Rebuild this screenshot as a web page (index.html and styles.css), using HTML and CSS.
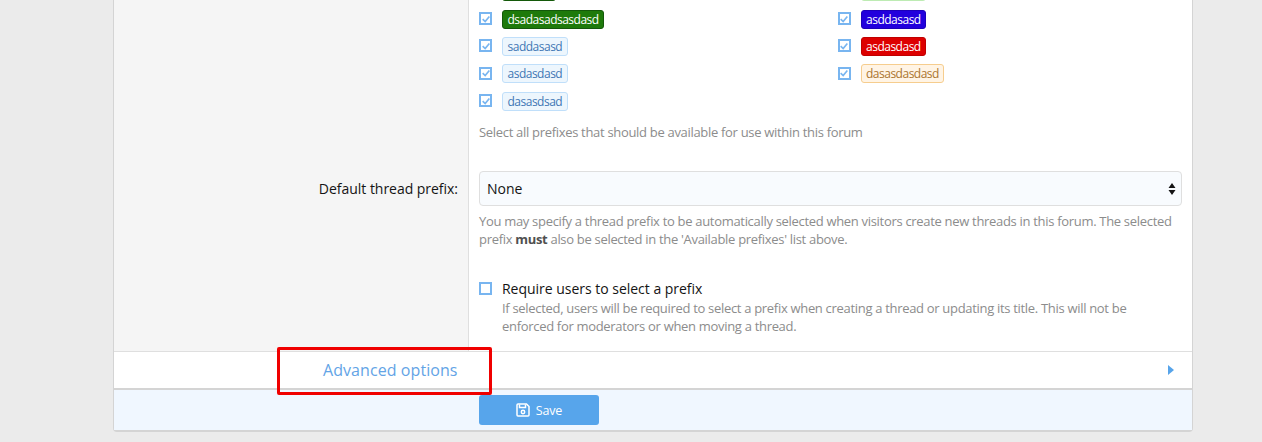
FILE: index.html
```html
<!DOCTYPE html>
<html lang="en">
<head>
<meta charset="utf-8">
<title>Forum options</title>
<link rel="stylesheet" href="styles.css">
</head>
<body>
<main class="card">
  <div class="form-body">
    <div class="form-row form-row-first">
      <div class="label-col"></div>
      <div class="field-col">
        <div class="prefix-grid">
          <label class="prefix"><span class="check checked"><svg viewBox="0 0 12 12"><path d="M2 6.200 5 9l5-6"/></svg></span><span class="badge badge-green">dsadsad</span></label>
          <label class="prefix"><span class="check checked"><svg viewBox="0 0 12 12"><path d="M2 6.200 5 9l5-6"/></svg></span><span class="badge badge-lightgreen">dsadsadsa</span></label>
          <label class="prefix"><span class="check checked"><svg viewBox="0 0 12 12"><path d="M2 6.200 5 9l5-6"/></svg></span><span class="badge badge-green">dsadasadsasdasd</span></label>
          <label class="prefix"><span class="check checked"><svg viewBox="0 0 12 12"><path d="M2 6.200 5 9l5-6"/></svg></span><span class="badge badge-blue">asddasasd</span></label>
          <label class="prefix"><span class="check checked"><svg viewBox="0 0 12 12"><path d="M2 6.200 5 9l5-6"/></svg></span><span class="badge badge-light">saddasasd</span></label>
          <label class="prefix"><span class="check checked"><svg viewBox="0 0 12 12"><path d="M2 6.200 5 9l5-6"/></svg></span><span class="badge badge-red">asdasdasd</span></label>
          <label class="prefix"><span class="check checked"><svg viewBox="0 0 12 12"><path d="M2 6.200 5 9l5-6"/></svg></span><span class="badge badge-light">asdasdasd</span></label>
          <label class="prefix"><span class="check checked"><svg viewBox="0 0 12 12"><path d="M2 6.200 5 9l5-6"/></svg></span><span class="badge badge-orange">dasasdasdasd</span></label>
          <label class="prefix"><span class="check checked"><svg viewBox="0 0 12 12"><path d="M2 6.200 5 9l5-6"/></svg></span><span class="badge badge-light">dasasdsad</span></label>
        </div>
        <p class="hint hint-prefixes">Select all prefixes that should be available for use within this forum</p>
      </div>
    </div>
    <div class="form-row">
      <div class="label-col"><span class="label-text">Default thread prefix:</span></div>
      <div class="field-col field-select">
        <div class="select"><span>None</span>
          <svg class="select-arrows" viewBox="0 0 8 12"><path d="M4 0 7.500 5H.5zM4 12 .5 7h7z"/></svg>
        </div>
        <p class="hint hint-select">You may specify a thread prefix to be automatically selected when visitors create new threads in this forum. The selected prefix <b>must</b> also be selected in the 'Available prefixes' list above.</p>
        <div class="require">
          <span class="check"></span>
          <div class="require-text">
            <div class="require-label">Require users to select a prefix</div>
            <p class="hint require-hint">If selected, users will be required to select a prefix when creating a thread or updating its title. This will not be enforced for moderators or when moving a thread.</p>
          </div>
        </div>
      </div>
    </div>
  </div>
  <div class="advanced">
    <span class="advanced-title">Advanced options</span>
    <svg class="advanced-arrow" viewBox="0 0 6 10"><path d="M0 0 6 5 0 10z"/></svg>
  </div>
  <div class="footer">
    <button class="save" type="button">
      <svg viewBox="0 0 14 14"><path class="save-outline" d="M2 1h8.500L13 3.500V12a1 1 0 0 1-1 1H2a1 1 0 0 1-1-1V2a1 1 0 0 1 1-1z"/><path class="save-outline" d="M3.500 1.500v3h6v-3"/><circle class="save-outline" cx="7" cy="9" r="1.700"/></svg>
      <span>Save</span>
    </button>
  </div>
</main>
<div class="highlight"></div>
</body>
</html>
```
FILE: styles.css
```css
* { box-sizing: border-box; }
html, body { height: 100%; }
body {
  margin: 0;
  height: 442px;
  overflow: hidden;
  background: #ebebeb;
  display: flex;
  flex-direction: column;
  justify-content: flex-end;
  align-items: flex-start;
  padding: 0 0 10px 113px;
  font-family: "Open Sans", "Noto Sans", sans-serif;
  font-size: 14px;
  color: #141414;
  position: relative;
}
.card {
  width: 1080px;
  flex: none;
  background: #fff;
  border: 1px solid #d4d4d4;
  border-top: 0;
  border-radius: 0 0 4px 4px;
  border-bottom-width: 2px;
}
.form-row { display: flex; }
.label-col {
  width: 355px;
  flex: none;
  background: #f5f5f5;
  border-right: 1px solid #dfdfdf;
  text-align: right;
  padding: 0 10px 0 0;
}
.label-text { display: block; padding-top: 18px; font-size: 14px; letter-spacing: -.03px; }
.field-col { flex: 1; padding: 0 10px; min-width: 0; }
.form-row-first .field-col { padding-top: 10px; }
.field-select { padding-top: 10px; padding-bottom: 16px; }
.prefix-grid {
  display: grid;
  grid-template-columns: 358.5px 1fr;
  row-gap: 7.33px;
}
.prefix { display: flex; align-items: center; height: 20px; gap: 10px; }
.check {
  width: 13px;
  height: 13px;
  flex: none;
  border: 2px solid #78b5f0;
  background: #fff;
  margin-top: -1px;
  display: flex;
}
.check svg { width: 10px; height: 10px; margin: -.5px; fill: none; stroke: #78b5f0; stroke-width: 2; }
.badge {
  display: inline-block;
  height: 19px;
  line-height: 17px;
  padding: 0 4.500px;
  border: 1px solid;
  border-radius: 3px;
  font-size: 12px;
  letter-spacing: -.5px;
}
.badge-green { background: #1e7a0b; border-color: #14590a; color: #fff; }
.badge-lightgreen { background: #e3f8de; border-color: #bdebb3; color: #2d7d1f; }
.badge-blue { background: #2200dd; border-color: #1c00bb; color: #fff; }
.badge-red { background: #dd0000; border-color: #c00000; color: #fff; }
.badge-light { background: #edf6fd; border-color: #c0dffa; color: #3f77b4; }
.badge-orange { background: #fff4e5; border-color: #f6cd8e; color: #ab7530; }
.hint {
  margin: 0;
  font-size: 13px;
  line-height: 18px;
  color: #8c8c8c;
  letter-spacing: -.31px;
}
.hint b { color: #505050; }
.hint-prefixes { margin-top: 12px; padding-bottom: 20px; }
.select {
  height: 35px;
  border: 1px solid #dfdfdf;
  border-radius: 4px;
  background: #f8fbfe;
  padding: 0 7px;
  display: flex;
  align-items: center;
  justify-content: space-between;
  font-size: 14px;
}
.select-arrows { width: 8px; height: 12px; fill: #141414; margin-right: -2px; }
.hint-select { margin-top: 6px; }
.require { display: flex; gap: 10px; margin-top: 31px; }
.require .check { margin-top: 3px; }
.require-label { font-size: 14px; line-height: 20px; letter-spacing: -.02px; }
.require-hint { max-width: 660px; }
.advanced {
  display: flex;
  align-items: center;
  justify-content: space-between;
  height: 37px;
  border-top: 1px solid #dfdfdf;
  padding: 0 18px 0 209px;
}
.advanced-title { font-size: 16px; letter-spacing: .07px; color: #63a4e6; }
.advanced-arrow { width: 6px; height: 10px; fill: #57a4ea; }
.footer {
  background: #f0f7ff;
  border-top: 2px solid #d4d4d4;
  height: 42px;
  padding: 5px 0 0 365px;
}
.save {
  width: 120px;
  height: 30px;
  border: 0;
  border-radius: 3px;
  background: #57a5eb;
  color: #fff;
  font-family: inherit;
  font-size: 12.5px;
  letter-spacing: -.2px;
  display: flex;
  align-items: center;
  justify-content: center;
  gap: 6px;
  padding: 0;
}
.save svg { width: 14px; height: 14px; }
.save-outline { fill: none; stroke: #fff; stroke-width: 1.500; }
.highlight {
  position: absolute;
  left: 277px;
  top: 347px;
  width: 215px;
  height: 48px;
  border: 3px solid #f00000;
  border-radius: 2px;
}
```
